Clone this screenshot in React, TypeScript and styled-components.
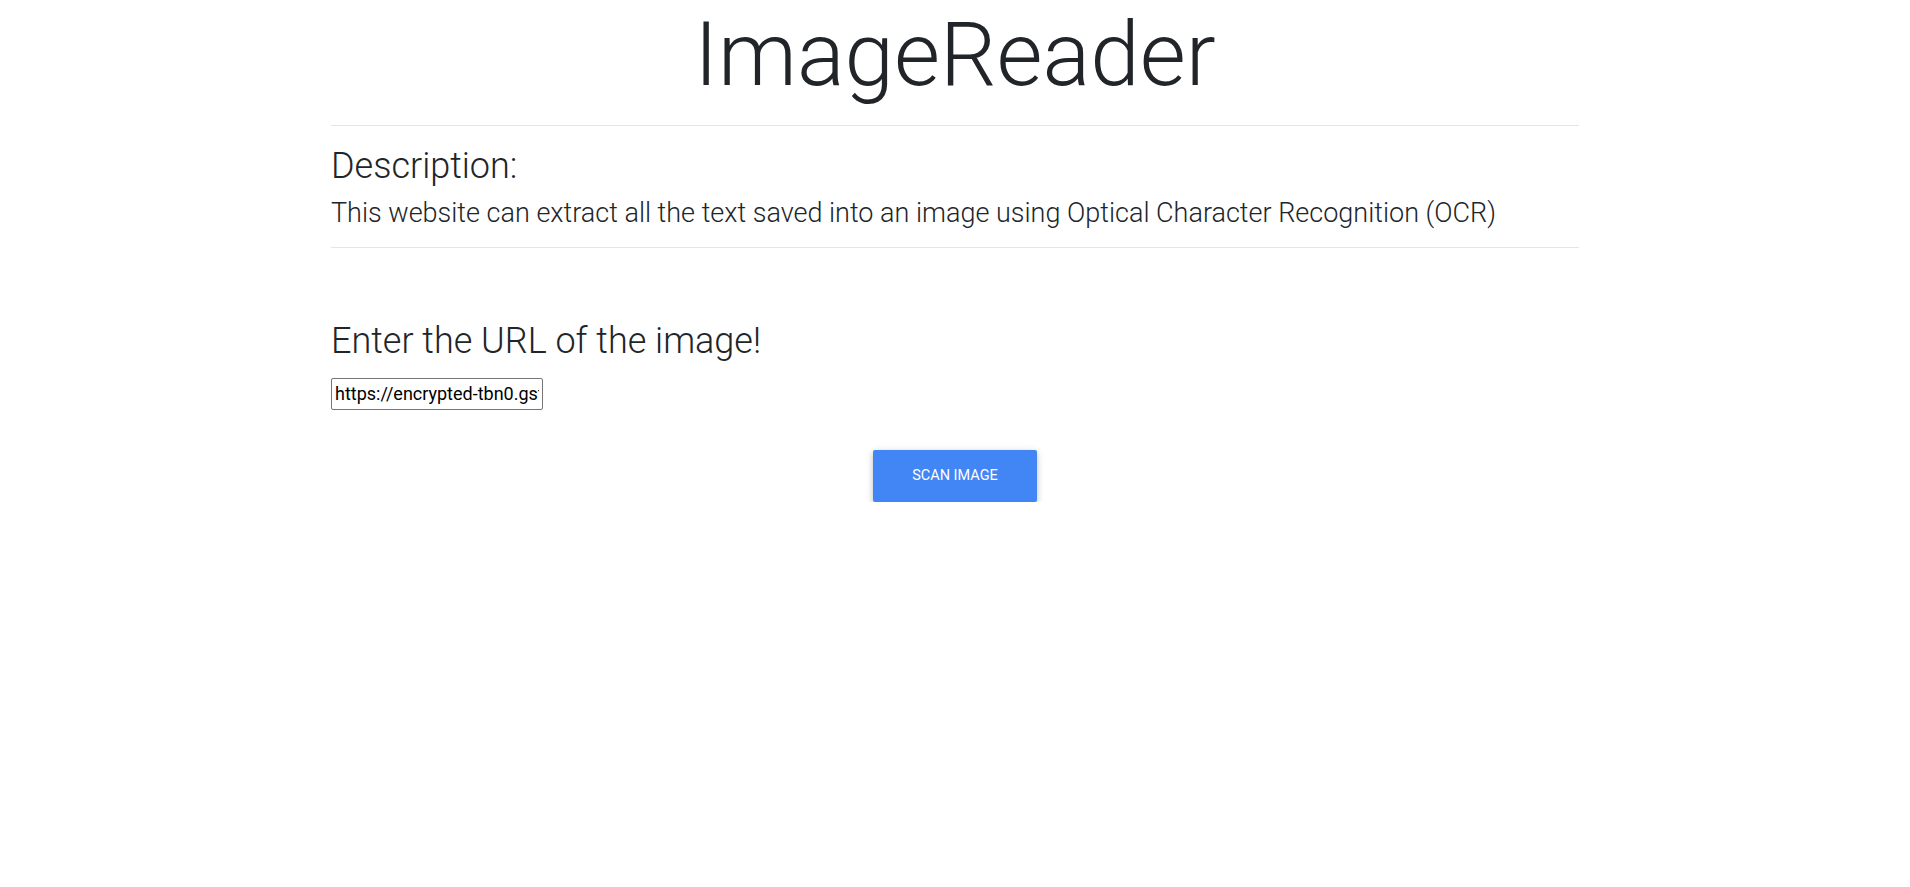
import React from "react";
import styled, { createGlobalStyle } from "styled-components";

const GlobalStyle = createGlobalStyle`
  html, body {
    margin: 0;
    padding: 0;
    background: #ffffff;
  }
  body {
    font-family: Roboto, "Liberation Sans", sans-serif;
    color: #212529;
  }
  * { box-sizing: border-box; }
`;

const Container = styled.main`
  width: 1248px;
  margin: 0 auto;
  display: flex;
  flex-direction: column;
`;

const Title = styled.h1`
  margin: 0;
  padding-top: 2px;
  font-family: Roboto, sans-serif;
  font-weight: 300;
  font-size: 89px;
  line-height: 1.2;
  text-align: center;
  color: #212529;
`;

const Rule = styled.hr<{ $top: number; $bottom: number }>`
  margin: ${(p) => p.$top}px 0 ${(p) => p.$bottom}px;
  border: 0;
  border-top: 1px solid rgba(0, 0, 0, 0.1);
  width: 100%;
`;

const Heading = styled.h3<{ $top?: number }>`
  margin: ${(p) => p.$top ?? 0}px 0 0;
  font-family: Roboto, sans-serif;
  font-weight: 300;
  font-size: 36px;
  line-height: 1.2;
  color: #212529;
`;

const Lead = styled.p`
  margin: 5px 0 0;
  font-family: Roboto, sans-serif;
  font-weight: 300;
  font-size: 27px;
  line-height: 1.5;
  color: #212529;
`;

const UrlInput = styled.input`
  margin-top: 14px;
  width: 212px;
  height: 32px;
  padding: 1px 3px 2px;
  border: 1px solid #767676;
  border-radius: 2px;
  font-family: Roboto, sans-serif;
  font-size: 18px;
  color: #000;
  background: #fff;
  outline: none;
`;

const Actions = styled.div`
  display: flex;
  justify-content: center;
  margin-top: 40px;
`;

const Button = styled.button`
  width: 164px;
  height: 52px;
  border: 0;
  border-radius: 2px;
  background: #4285f4;
  color: #ffffff;
  font-family: Roboto, sans-serif;
  font-size: 14.5px;
  font-weight: 400;
  text-transform: uppercase;
  box-shadow: 0 2px 5px 0 rgba(0, 0, 0, 0.16), 0 2px 10px 0 rgba(0, 0, 0, 0.12);
  cursor: pointer;
`;

export default function App() {
  return (
    <>
      <GlobalStyle />
      <Container>
        <Title>ImageReader</Title>
        <Rule $top={16} $bottom={0} />
        <Heading $top={19}>Description:</Heading>
        <Lead>
          This website can extract all the text saved into an image using Optical
          Character Recognition (OCR)
        </Lead>
        <Rule $top={14} $bottom={0} />
        <Heading $top={72}>Enter the URL of the image!</Heading>
        <div>
          <UrlInput
            type="text"
            defaultValue="https://encrypted-tbn0.gstatic.com/images?q=tbn:ANd9GcR"
          />
        </div>
        <Actions>
          <Button>Scan Image</Button>
        </Actions>
      </Container>
    </>
  );
}
